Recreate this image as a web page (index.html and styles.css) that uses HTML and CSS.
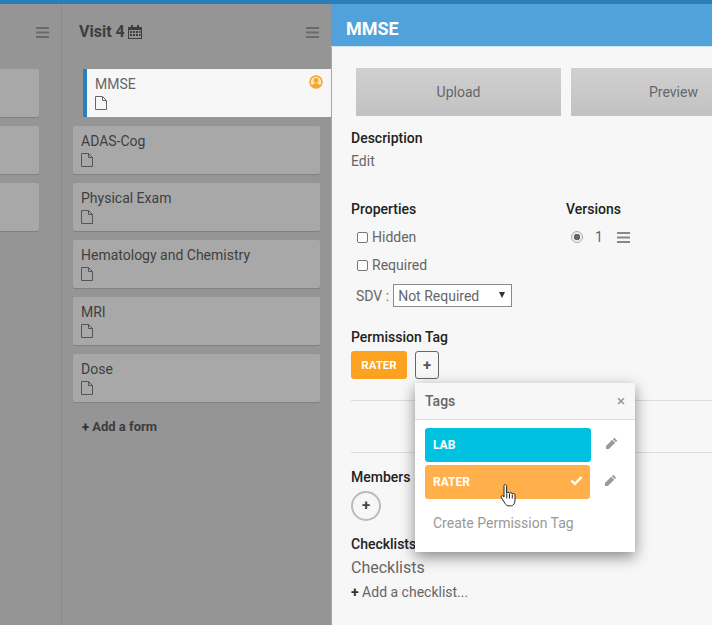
FILE: index.html
```html
<!DOCTYPE html>
<html lang="en">
<head>
    <meta charset="UTF-8">
    <title>MMSE</title>
    <link rel="stylesheet" href="styles.css">
</head>
<body>

<div class="top-bar"></div>

<div class="app">
    <div class="board">
        <div class="column column-cut">
            <div class="column-head">
                <svg class="menu-icon" viewBox="0 0 13 11"><path d="M0 0h13v2H0zM0 4.500h13v2H0zM0 9h13v2H0z"/></svg>
            </div>
            <div class="card"></div>
            <div class="card"></div>
            <div class="card"></div>
        </div>

        <div class="column column-visit">
            <div class="column-head">
                <span class="column-title">Visit 4</span>
                <svg class="calendar-icon" viewBox="0 0 14 14"><path d="M0 2h3V0h2v2h4V0h2v2h3v12H0zM1 5v8h12V5zM2 6h2v2H2zM5 6h2v2H5zM8 6h2v2H8zM11 6h1.500v2H11zM2 9h2v2H2zM5 9h2v2H5zM8 9h2v2H8zM11 9h1.500v2H11z"/></svg>
                <svg class="menu-icon" viewBox="0 0 13 11"><path d="M0 0h13v2H0zM0 4.500h13v2H0zM0 9h13v2H0z"/></svg>
            </div>

            <div class="card card-active">
                <div class="card-title">MMSE</div>
                <svg class="file-icon" viewBox="0 0 12 14"><path d="M.5.500h7l4 4v9H.5zM7.500.500v4h4"/></svg>
                <svg class="user-badge" viewBox="0 0 14 14"><circle cx="7" cy="7" r="6" class="badge-ring"/><circle cx="7" cy="5.500" r="2.400" class="badge-fill"/><path d="M2.800 11c.8-2 2.300-2.800 4.200-2.800s3.400.8 4.200 2.800c-2.200 2-6.200 2-8.400 0z" class="badge-fill"/></svg>
            </div>
            <div class="card">
                <div class="card-title">ADAS-Cog</div>
                <svg class="file-icon" viewBox="0 0 12 14"><path d="M.5.500h7l4 4v9H.5zM7.500.500v4h4"/></svg>
            </div>
            <div class="card">
                <div class="card-title">Physical Exam</div>
                <svg class="file-icon" viewBox="0 0 12 14"><path d="M.5.500h7l4 4v9H.5zM7.500.500v4h4"/></svg>
            </div>
            <div class="card">
                <div class="card-title">Hematology and Chemistry</div>
                <svg class="file-icon" viewBox="0 0 12 14"><path d="M.5.500h7l4 4v9H.5zM7.500.500v4h4"/></svg>
            </div>
            <div class="card">
                <div class="card-title">MRI</div>
                <svg class="file-icon" viewBox="0 0 12 14"><path d="M.5.500h7l4 4v9H.5zM7.500.500v4h4"/></svg>
            </div>
            <div class="card">
                <div class="card-title">Dose</div>
                <svg class="file-icon" viewBox="0 0 12 14"><path d="M.5.500h7l4 4v9H.5zM7.500.500v4h4"/></svg>
            </div>
            <div class="add-form"><b class="plus">+</b> Add a form</div>
        </div>
    </div>

    <div class="panel">
        <div class="panel-head">MMSE</div>

        <div class="panel-body">
            <div class="file-buttons">
                <div class="file-btn">Upload</div>
                <div class="file-btn">Preview</div>
            </div>

            <h4 class="label label-description">Description</h4>
            <div class="edit-link">Edit</div>

            <div class="two-cols">
                <div class="props">
                    <h4 class="label">Properties</h4>
                    <div class="check-row"><span class="checkbox"></span>Hidden</div>
                    <div class="check-row"><span class="checkbox"></span>Required</div>
                    <div class="sdv-row">
                        SDV :
                        <div class="select-wrap">
                            <select class="sdv-select"><option>Not Required</option></select>
                        </div>
                    </div>
                </div>
                <div class="versions">
                    <h4 class="label">Versions</h4>
                    <div class="version-row">
                        <span class="radio"></span>
                        <span class="version-num">1</span>
                        <svg class="version-menu" viewBox="0 0 13 11"><path d="M0 0h13v2H0zM0 4.500h13v2H0zM0 9h13v2H0z"/></svg>
                    </div>
                </div>
            </div>

            <h4 class="label label-permission">Permission Tag</h4>
            <div class="tag-row">
                <span class="tag">RATER</span>
                <span class="tag-add">+</span>
            </div>

            <hr class="rule rule-first">
            <hr class="rule rule-second">

            <h4 class="label label-members">Members</h4>
            <div class="member-add">+</div>

            <h4 class="label label-checklists">Checklists</h4>
            <div class="checklist-title">Checklists</div>
            <div class="add-checklist"><b class="plus">+</b> Add a checklist...</div>
        </div>

        <div class="tags-popup">
            <div class="popup-head">
                <span>Tags</span>
                <span class="popup-close">&times;</span>
            </div>
            <div class="popup-body">
                <div class="popup-row">
                    <div class="popup-tag popup-tag-lab">LAB</div>
                    <svg class="pencil" viewBox="0 0 14 14"><path d="M10 .8l3.200 3.200-1.500 1.500-3.200-3.200zM7.800 3l3.200 3.200-6.800 6.800H1v-3.200z"/></svg>
                </div>
                <div class="popup-row">
                    <div class="popup-tag popup-tag-rater">RATER
                        <svg class="check" viewBox="0 0 14 11"><path d="M1.500 5.500l3.700 3.700 7.300-7.400" /></svg>
                    </div>
                    <svg class="pencil" viewBox="0 0 14 14"><path d="M10 .8l3.200 3.200-1.500 1.500-3.200-3.200zM7.800 3l3.200 3.200-6.800 6.800H1v-3.200z"/></svg>
                </div>
                <div class="popup-create">Create Permission Tag</div>
            </div>
        </div>

        <svg class="hand-cursor" viewBox="0 0 18 24"><path d="M5 1.500c1 0 1.600.7 1.600 1.700v7c.3-1.300 2.600-1.300 2.900.2.400-1 2.500-1 2.800.5.500-.8 2.500-.6 2.700 1v5c0 3-1.400 6-4.500 6H9c-2 0-3.100-1-4-2.500L1.300 14.500c-.8-1.300 1-2.600 2-1.500l.7 1V3.200c0-1 .4-1.700 1-1.700zM6.800 10.500v5M9.500 11v4.500M12.300 11.500v4"/></svg>
    </div>
</div>

</body>
</html>
```

FILE: styles.css
```css
* {
    box-sizing: border-box;
}

html, body {
    height: 100%;
}

body {
    margin: 0;
    overflow: hidden;
    font-family: Roboto, Arial, sans-serif;
    font-size: 14px;
    color: #666;
    background-color: #959595;
}

.top-bar {
    height: 4px;
    background-color: #2a7fba;
}

.app {
    display: flex;
    height: 621px;
}

/* board, dimmed behind the panel */
.board {
    width: 331px;
    flex: none;
    display: flex;
    background-color: #959595;
}

.column {
    flex: none;
    border-right: 1px solid #8b8b8b;
}

.column-cut {
    width: 62px;
    padding-right: 11px;
}

.column-cut .card {
    margin-left: -10px;
}

.column-visit {
    width: 269px;
    padding-left: 11px;
    border-right: none;
}

.column-head {
    height: 65px;
    padding-top: 17px;
    display: flex;
    align-items: flex-start;
    position: relative;
}

.column-title {
    font-size: 16px;
    font-weight: 700;
    line-height: 22px;
    color: #3d3d3d;
    margin-left: 6px;
}

.calendar-icon {
    width: 14px;
    height: 14px;
    margin: 4px 0 0 3px;
    fill: #3d3d3d;
}

.menu-icon {
    width: 13px;
    height: 11px;
    fill: #6a6a6a;
    position: absolute;
    top: 23px;
    right: 0;
}

.column-cut .menu-icon {
    right: 1px;
}

.column-visit .menu-icon {
    right: 12px;
}

.card {
    height: 48px;
    margin: 0 11px 9px 0;
    padding: 7px 8px;
    position: relative;
    border-radius: 2px;
    background-color: #a8a8a8;
    box-shadow: 0 1px 1px rgba(0, 0, 0, 0.15);
}

.card-title {
    line-height: 16px;
    color: #3f3f3f;
}

.file-icon {
    display: block;
    width: 12px;
    height: 14px;
    margin-top: 4px;
    fill: none;
    stroke: #555;
}

.card-active {
    margin: 0 -1px 9px 10px;
    padding-left: 8px;
    border-left: 4px solid #2a7fba;
    border-radius: 0;
    background-color: #f7f7f7;
    box-shadow: none;
}

.card-active .card-title {
    color: #666;
}

.card-active .file-icon {
    stroke: #666;
}

.user-badge {
    width: 14px;
    height: 14px;
    position: absolute;
    top: 6px;
    right: 9px;
}

.badge-ring {
    fill: #fbe6c4;
    stroke: #f5a428;
    stroke-width: 1.500;
}

.badge-fill {
    fill: #f5a428;
}

.add-form {
    margin: 16px 0 0 9px;
    font-size: 13px;
    font-weight: 700;
    line-height: 18px;
    color: #3d3d3d;
}

/* side panel */
.panel {
    flex: 1;
    min-width: 0;
    position: relative;
    border-left: 1px solid #a5a5a5;
    background-color: #f7f7f7;
}

.panel-head {
    height: 43px;
    padding: 14px 0 0 15px;
    margin-left: -1px;
    font-size: 18px;
    font-weight: 700;
    line-height: 22px;
    color: #fff;
    background-color: #51a2da;
    border-bottom: 1px solid #cfe3f2;
}

.panel-body {
    padding: 21px 0 0 19px;
}

.file-buttons {
    display: flex;
    gap: 10px;
    margin-left: 5px;
}

.file-btn {
    flex: none;
    width: 205px;
    height: 48px;
    line-height: 48px;
    text-align: center;
    color: #666;
    background: linear-gradient(#d0d0d0, #c2c2c2);
}

.label {
    margin: 0;
    font-size: 14px;
    font-weight: 500;
    line-height: 18px;
    color: #222;
}

.label-description {
    margin-top: 13px;
}

.edit-link {
    margin-top: 5px;
    line-height: 18px;
}

.two-cols {
    display: flex;
    margin-top: 30px;
}

.props {
    width: 215px;
}

.check-row {
    height: 28px;
    margin-left: 5px;
    display: flex;
    align-items: center;
}

.check-row:first-of-type {
    margin-top: 5px;
}

.checkbox {
    width: 11px;
    height: 11px;
    margin: 0 4px 0 1px;
    border: 1px solid #777;
    border-radius: 2px;
    background-color: #fff;
}

.sdv-row {
    margin: 5px 0 0 5px;
    display: flex;
    align-items: center;
    gap: 4px;
}

.select-wrap {
    position: relative;
    width: 119px;
    height: 23px;
}

.select-wrap::after {
    content: "";
    position: absolute;
    top: 8px;
    right: 7px;
    border-style: solid;
    border-width: 6px 3.500px 0;
    border-color: #333 transparent transparent;
}

.sdv-select {
    width: 100%;
    height: 100%;
    padding: 0 4px;
    appearance: none;
    font-family: Roboto, Arial, sans-serif;
    font-size: 14px;
    color: #666;
    background-color: #fff;
    border: 1px solid #8a8a8a;
    border-radius: 0;
}

.version-row {
    margin-top: 5px;
    height: 28px;
    display: flex;
    align-items: center;
}

.radio {
    width: 12px;
    height: 12px;
    margin-left: 5px;
    border-radius: 50%;
    border: 1px solid #aaa;
    background: radial-gradient(circle, #666 0, #666 3px, #eee 3.500px);
}

.version-num {
    margin-left: 12px;
    font-size: 14px;
}

.version-menu {
    width: 13px;
    height: 11px;
    margin-left: 14px;
    fill: #888;
}

.label-permission {
    margin-top: 21px;
}

.tag-row {
    display: flex;
    gap: 8px;
    margin-top: 5px;
}

.tag {
    width: 56px;
    height: 28px;
    line-height: 28px;
    text-align: center;
    font-size: 11.500px;
    font-weight: 700;
    color: #fff;
    border-radius: 3px;
    background-color: #fca120;
}

.tag-add {
    width: 24px;
    height: 28px;
    line-height: 26px;
    text-align: center;
    font-size: 15px;
    font-weight: 700;
    color: #555;
    border: 1px solid #666;
    border-radius: 3px;
}

.rule {
    margin: 0 0 0 0;
    border: none;
    border-top: 1px solid #ddd;
}

.rule-first {
    margin-top: 21px;
}

.rule-second {
    margin-top: 51px;
}

.label-members {
    margin-top: 15px;
}

.member-add {
    width: 30px;
    height: 30px;
    margin-top: 5px;
    line-height: 25px;
    text-align: center;
    font-size: 15px;
    font-weight: 700;
    color: #444;
    border: 2px solid #bbb;
    border-radius: 50%;
}

.label-checklists {
    margin-top: 14px;
}

.checklist-title {
    margin-top: 5px;
    font-size: 16px;
    line-height: 20px;
}

.add-checklist {
    margin-top: 5px;
    line-height: 18px;
}

.plus {
    color: #333;
}

/* tags popup over the panel */
.tags-popup {
    position: absolute;
    top: 379px;
    left: 83px;
    width: 220px;
    height: 169px;
    background-color: #fff;
    box-shadow: 0 5px 14px rgba(0, 0, 0, 0.45);
}

.popup-head {
    height: 37px;
    padding: 0 10px;
    display: flex;
    justify-content: space-between;
    align-items: center;
    font-weight: 500;
    color: #666;
    background-color: #f7f7f7;
    border-bottom: 1px solid #ddd;
}

.popup-close {
    font-size: 15px;
    color: #999;
}

.popup-body {
    padding: 8px 10px 0;
}

.popup-row {
    height: 37px;
    display: flex;
    align-items: flex-start;
}

.popup-tag {
    height: 34px;
    padding-left: 8px;
    position: relative;
    line-height: 34px;
    font-size: 12px;
    font-weight: 700;
    color: #fff;
    border-radius: 3px;
}

.popup-tag-lab {
    width: 166px;
    background-color: #00c2e0;
}

.popup-tag-rater {
    width: 165px;
    background-color: #ffb04a;
}

.check {
    width: 13px;
    height: 11px;
    position: absolute;
    top: 10px;
    right: 7px;
    fill: none;
    stroke: #fff;
    stroke-width: 2.500;
}

.pencil {
    width: 13px;
    height: 13px;
    margin: 9px 0 0 14px;
    fill: #9a9a9a;
}

.popup-create {
    padding: 12px 0 0 8px;
    line-height: 18px;
    color: #999;
}

.hand-cursor {
    position: absolute;
    top: 479px;
    left: 168px;
    width: 18px;
    height: 24px;
    fill: #fff;
    stroke: #222;
    stroke-width: 1;
}
```
